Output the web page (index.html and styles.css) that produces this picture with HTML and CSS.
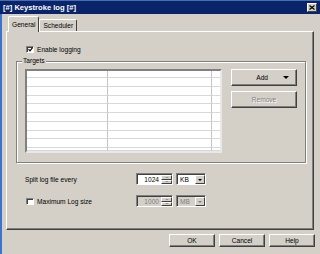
FILE: index.html
```html
<!DOCTYPE html>
<html lang="en">
<head>
  <meta charset="UTF-8">
  <meta name="viewport" content="width=device-width, initial-scale=1.0">
  <title>Keystroke log</title>
  <link rel="stylesheet" href="styles.css">
</head>
<body>
  <div class="window">
    <div class="titlebar">
      <span class="title">[#] Keystroke log [#]</span>
      <span class="close">
        <svg width="6" height="5" viewBox="0 0 6 5"><path d="M0.5 0.5 L5.5 4.5 M5.5 0.5 L0.5 4.5" stroke="#000" stroke-width="1.2"/></svg>
      </span>
    </div>
    <div class="body">
      <div class="tabs">
        <div class="tab active">General</div>
        <div class="tab">Scheduler</div>
      </div>
      <div class="panel">
        <label class="check-row">
          <span class="checkbox"><svg width="5" height="5" viewBox="0 0 5 5"><path d="M0.5 2.2 L2 3.8 L4.6 0.6" stroke="#000" stroke-width="1.1" fill="none"/></svg></span>
          Enable logging
        </label>

        <!-- targets group -->
        <div class="group">
          <span class="group-label">Targets</span>
          <div class="list">
            <div></div><div></div><div></div>
            <div></div><div></div><div></div>
            <div></div><div></div><div></div>
            <div></div><div></div><div></div>
            <div></div><div></div><div></div>
            <div></div><div></div><div></div>
            <div></div><div></div><div></div>
            <div></div><div></div><div></div>
            <div></div><div></div><div></div>
            <div></div><div></div><div></div>
          </div>
          <div class="group-buttons">
            <button type="button" class="btn btn-add"><span>Add</span><span class="arrow"></span></button>
            <button type="button" class="btn" disabled>Remove</button>
          </div>
        </div>

        <div class="field-row">
          <span class="field-label">Split log file every</span>
          <div class="spinner">
            <span class="spin-value">1024</span>
            <span class="spin-arrows"><span class="spin-up"></span><span class="spin-down"></span></span>
          </div>
          <div class="combo">
            <span class="combo-value">KB</span>
            <span class="combo-btn"></span>
          </div>
        </div>

        <div class="field-row">
          <label class="field-label check-label"><span class="checkbox"></span>Maximum Log size</label>
          <div class="spinner disabled">
            <span class="spin-value">1000</span>
            <span class="spin-arrows"><span class="spin-up"></span><span class="spin-down"></span></span>
          </div>
          <div class="combo disabled">
            <span class="combo-value">MB</span>
            <span class="combo-btn"></span>
          </div>
        </div>
      </div>

      <div class="footer">
        <button type="button" class="btn btn-dialog">OK</button>
        <button type="button" class="btn btn-dialog">Cancel</button>
        <button type="button" class="btn btn-dialog">Help</button>
      </div>
    </div>
  </div>
</body>
</html>
```

FILE: styles.css
```css
body {
  margin: 0;
  font-family: "Liberation Sans", Arial, sans-serif;
  font-size: 6.6px;
  color: #000;
  background-color: #d4d0c8;
}
.window {
  width: 320px;
  height: 254px;
  display: flex;
  flex-direction: column;
  background-color: #d4d0c8;
  overflow: hidden;
}
.titlebar {
  height: 13px;
  border-top: 1px solid #4a6cb0;
  background-color: #0a246a;
  display: flex;
  align-items: center;
  justify-content: space-between;
  padding: 0 3px 0 3px;
}
.title {
  color: #fff;
  font-weight: bold;
  font-size: 7.6px;
}
.close {
  width: 8px;
  height: 7px;
  display: flex;
  align-items: center;
  justify-content: center;
  background-color: #d4d0c8;
  border: 1px solid;
  border-color: #fff #404040 #404040 #fff;
}
.body {
  flex: 1;
  display: flex;
  flex-direction: column;
  border-left: 2px solid #3b73d0;
  padding: 3px 5px 0 4px;
}

/* tabs */
.tabs {
  height: 14px;
  display: flex;
  align-items: flex-end;
  padding-left: 2px;
}
.tab {
  height: 11px;
  padding: 0 3px;
  display: flex;
  align-items: center;
  border: 1px solid;
  border-bottom: none;
  border-color: #fff #404040 #fff #fff;
  border-radius: 2px 2px 0 0;
}
.tab.active {
  height: 14px;
  margin-bottom: -1px;
  padding: 0 3px 1px 3px;
  background-color: #d4d0c8;
  position: relative;
  z-index: 1;
}
.panel {
  height: 184px;
  flex-shrink: 0;
  margin-right: 1px;
  display: flex;
  flex-direction: column;
  border: 1px solid;
  border-color: #fff #404040 #404040 #fff;
  box-shadow: inset -1px -1px 0 #808080;
  padding: 13px 0 0 9px;
}

/* checkboxes */
.check-row {
  height: 9px;
  display: flex;
  align-items: center;
  margin-left: 10px;
}
.checkbox {
  width: 5px;
  height: 5px;
  display: flex;
  align-items: center;
  justify-content: center;
  margin-right: 3px;
  background-color: #fff;
  border: 1px solid;
  border-color: #808080 #fff #fff #808080;
  box-shadow: inset 1px 1px 0 #404040;
  padding: 0 0 0 1px;
}

/* targets group */
.group {
  position: relative;
  width: 272px;
  height: 84px;
  margin-top: 7px;
  display: flex;
  gap: 9px;
  padding: 7px 8px 9px 8px;
  border: 1px solid #808080;
  box-shadow: inset 1px 1px 0 #fff, 1px 1px 0 #fff;
}
.group-label {
  position: absolute;
  left: 5px;
  top: -5px;
  padding: 0 1px;
  line-height: 8px;
  background-color: #d4d0c8;
}
.list {
  width: 193px;
  height: 80px;
  display: grid;
  grid-template-columns: 81px 104px 1fr;
  grid-template-rows: 7px repeat(8, 8.75px) 1fr;
  background-color: #fff;
  border: 2px solid;
  border-color: #808080 #e8e8e8 #e8e8e8 #808080;
}
.list div {
  border-bottom: 1px solid #d8d8d8;
}
.list div:nth-child(3n+1),
.list div:nth-child(3n+2) {
  border-right: 1px solid #c4c4c4;
}
.group-buttons {
  width: 66px;
  display: flex;
  flex-direction: column;
  gap: 5px;
}

/* buttons */
.btn {
  height: 17px;
  padding: 0;
  font-family: inherit;
  font-size: inherit;
  color: #000;
  background-color: #d4d0c8;
  border: 1px solid;
  border-color: #fff #404040 #404040 #fff;
  box-shadow: inset -1px -1px 0 #808080;
  border-radius: 0;
}
.btn:disabled {
  color: #808080;
  text-shadow: 1px 1px 0 #fff;
}
.btn-add {
  display: flex;
  align-items: center;
  justify-content: flex-end;
  gap: 15px;
  padding-right: 7px;
}
.arrow {
  width: 0;
  height: 0;
  border-left: 3px solid transparent;
  border-right: 3px solid transparent;
  border-top: 3px solid #000;
}

/* split / max size rows */
.field-row {
  height: 12px;
  display: flex;
  align-items: center;
  margin-top: 10px;
  margin-left: 9px;
}
.field-label {
  width: 111px;
}
.check-label {
  display: flex;
  align-items: center;
  margin-left: 1px;
  width: 110px;
}
.spinner {
  width: 34px;
  height: 9px;
  display: flex;
  background-color: #fff;
  border: 1px solid;
  border-color: #808080 #fff #fff #808080;
  box-shadow: inset 1px 1px 0 #404040;
  padding: 1px 0 0 1px;
  margin-right: 3px;
}
.spin-value {
  flex: 1;
  text-align: right;
  padding-right: 2px;
  line-height: 9px;
}
.spin-arrows {
  width: 11px;
  display: flex;
  flex-direction: column;
}
.spin-up,
.spin-down {
  flex: 1;
  display: flex;
  align-items: center;
  justify-content: center;
  background-color: #d4d0c8;
  border: 1px solid;
  border-color: #fff #404040 #404040 #fff;
}
.spin-up::after {
  content: "";
  border-left: 2px solid transparent;
  border-right: 2px solid transparent;
  border-bottom: 1px solid #808080;
}
.spin-down::after {
  content: "";
  border-left: 2px solid transparent;
  border-right: 2px solid transparent;
  border-top: 1px solid #808080;
}
.combo {
  width: 27px;
  height: 9px;
  display: flex;
  background-color: #fff;
  border: 1px solid;
  border-color: #808080 #fff #fff #808080;
  box-shadow: inset 1px 1px 0 #404040;
  padding: 1px 0 0 1px;
}
.combo-value {
  flex: 1;
  padding-left: 2px;
  line-height: 9px;
}
.combo-btn {
  width: 8px;
  display: flex;
  align-items: center;
  justify-content: center;
  background-color: #d4d0c8;
  border: 1px solid;
  border-color: #fff #404040 #404040 #fff;
}
.combo-btn::after {
  content: "";
  border-left: 2px solid transparent;
  border-right: 2px solid transparent;
  border-top: 2px solid #000;
}
.disabled,
.disabled .combo-value {
  background-color: #d4d0c8;
  color: #808080;
}
.disabled .combo-btn::after {
  border-top-color: #808080;
}

/* dialog buttons */
.footer {
  display: flex;
  justify-content: flex-end;
  gap: 4px;
  padding-top: 4px;
}
.btn-dialog {
  width: 46px;
  height: 13px;
}
```
